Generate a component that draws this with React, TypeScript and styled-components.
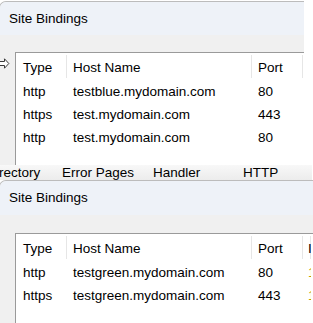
import React from "react";
import styled, { createGlobalStyle } from "styled-components";

const Global = createGlobalStyle`
  html, body { margin: 0; padding: 0; background: #ffffff; overflow: hidden; }
  #root { width: 313px; height: 323px; }
`;

const FONT = `"Liberation Sans", Arial, sans-serif`;

const Page = styled.div`
  width: 313px;
  height: 323px;
  overflow: hidden;
  display: flex;
  flex-direction: column;
  align-items: flex-start;
  background: #ffffff;
  font-family: ${FONT};
  font-size: 13.5px;
  color: #000000;
`;

const Window = styled.section<{ $width: number; $height: number; $top: number }>`
  box-sizing: border-box;
  flex-shrink: 0;
  width: ${(p) => p.$width}px;
  height: ${(p) => p.$height}px;
  margin-top: ${(p) => p.$top}px;
  margin-left: -1px;
  border-top: 1px solid #bcbcbc;
  border-left: 1px solid #bcbcbc;
  border-top-left-radius: 7px;
  overflow: hidden;
  display: flex;
  flex-direction: column;
  background: #f0f0f0;
`;

const TitleBar = styled.header<{ $h: number }>`
  flex-shrink: 0;
  height: ${(p) => p.$h}px;
  line-height: ${(p) => p.$h}px;
  padding-left: 9px;
  background: #eef2f8;
  white-space: nowrap;
`;

const Band = styled.div<{ $h: number }>`
  flex-shrink: 0;
  height: ${(p) => p.$h}px;
  background: #f0f0f0;
`;

const ListArea = styled.div`
  flex: 1;
  display: flex;
  min-height: 0;
`;

const Gutter = styled.div`
  flex-shrink: 0;
  width: 15px;
  padding-top: 5px;
  box-sizing: border-box;
`;

const ListView = styled.div`
  flex: 1;
  min-width: 0;
  background: #ffffff;
  border-top: 1px solid #9a9a9a;
  border-left: 1px solid #9a9a9a;
  overflow: hidden;
`;

const Row = styled.div<{ $header?: boolean }>`
  display: grid;
  grid-template-columns: 51px 185px 51px 8px;
  height: ${(p) => (p.$header ? 27 : 23)}px;
  line-height: ${(p) => (p.$header ? 27 : 23)}px;
  white-space: nowrap;
`;

const HeadCell = styled.div<{ $pad: number }>`
  padding-left: ${(p) => p.$pad}px;
  padding-top: 1px;
  box-sizing: border-box;
  overflow: hidden;
  background: linear-gradient(#e6e6e6, #e6e6e6) right 2px / 1px calc(100% - 4px) no-repeat;
`;

const Cell = styled.div<{ $pad: number; $faint?: boolean }>`
  padding-left: ${(p) => p.$pad}px;
  overflow: hidden;
  color: ${(p) => (p.$faint ? "#c2a200" : "#000000")};
`;

const TabStrip = styled.nav`
  flex-shrink: 0;
  width: 313px;
  height: 15px;
  display: grid;
  grid-template-columns: 63px 91px 90px 80px;
  margin-left: -1px;
  line-height: 15px;
  background: linear-gradient(#f8f8f8, #ececec);
  white-space: nowrap;
  overflow: hidden;
`;

const Tab = styled.span`
  font-size: 13.5px;
`;

const Arrow = () => (
  <svg width="10" height="11" viewBox="0 0 10 11" aria-hidden="true">
    <path
      d="M-2 3.5 H4.5 V0.8 L8.8 5.5 L4.5 10.2 V7.5 H-2 Z"
      fill="#ffffff"
      stroke="#3a3a3a"
      strokeWidth="1"
      strokeLinejoin="miter"
    />
  </svg>
);

type Binding = { type: string; host: string; port: string; ip?: string };

const Bindings = ({
  rows,
  showIp,
  arrow,
}: {
  rows: Binding[];
  showIp?: boolean;
  arrow?: boolean;
}) => (
  <ListArea>
    <Gutter>{arrow && <Arrow />}</Gutter>
    <ListView>
      <Row $header>
        <HeadCell $pad={7}>Type</HeadCell>
        <HeadCell $pad={6}>Host Name</HeadCell>
        <HeadCell $pad={6}>Port</HeadCell>
        <HeadCell $pad={5}>{showIp ? "I" : ""}</HeadCell>
      </Row>
      {rows.map((r, i) => (
        <Row key={i}>
          <Cell $pad={7}>{r.type}</Cell>
          <Cell $pad={6}>{r.host}</Cell>
          <Cell $pad={6}>{r.port}</Cell>
          <Cell $pad={5} $faint>
            {showIp ? r.ip : ""}
          </Cell>
        </Row>
      ))}
    </ListView>
  </ListArea>
);

export default function App() {
  return (
    <>
      <Global />
      <Page>
        <Window $width={305} $height={164} $top={1}>
          <TitleBar $h={33}>Site Bindings</TitleBar>
          <Band $h={17} />
          <Bindings
            arrow
            rows={[
              { type: "http", host: "testblue.mydomain.com", port: "80" },
              { type: "https", host: "test.mydomain.com", port: "443" },
              { type: "http", host: "test.mydomain.com", port: "80" },
            ]}
          />
        </Window>
        <TabStrip>
          <Tab>rectory</Tab>
          <Tab>Error Pages</Tab>
          <Tab>Handler</Tab>
          <Tab>HTTP</Tab>
        </TabStrip>
        <Window $width={320} $height={143} $top={0}>
          <TitleBar $h={34}>Site Bindings</TitleBar>
          <Band $h={18} />
          <Bindings
            showIp
            rows={[
              { type: "http", host: "testgreen.mydomain.com", port: "80", ip: "1" },
              { type: "https", host: "testgreen.mydomain.com", port: "443", ip: "1" },
            ]}
          />
        </Window>
      </Page>
    </>
  );
}
